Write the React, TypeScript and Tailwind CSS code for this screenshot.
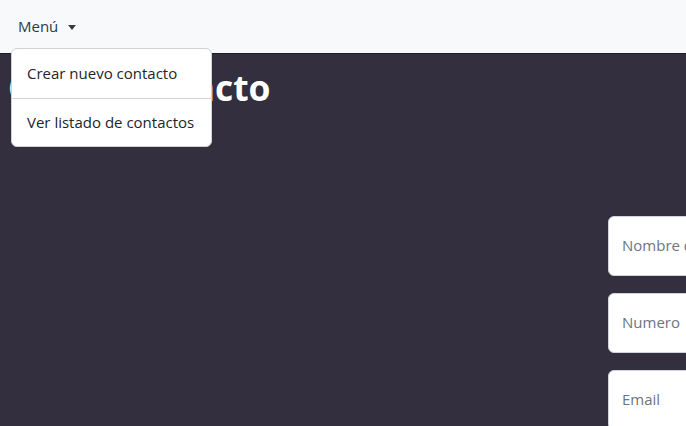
const fields = ["Nombre de contacto", "Numero", "Email"];

export default function App() {
  return (
    <div className="relative h-[426px] w-[686px] overflow-hidden bg-[#342f3e] font-['Open_Sans',sans-serif]">
      {/* Navbar */}
      <nav className="flex h-[54px] items-center border-b border-[#1e1b24] bg-[#f8f9fa] px-[18px]">
        <button className="flex items-center gap-[10px] text-[15px] text-[#2b3a48]">
          Menú
          <span className="mt-[1px] h-0 w-0 border-x-[4.5px] border-t-[5px] border-x-transparent border-t-[#3a3a3a]" />
        </button>
      </nav>

      {/* Dropdown menu */}
      <div className="absolute left-[11px] top-[48px] z-10 w-[201px] rounded-md border border-[#d0d2d5] bg-white">
        <div className="flex h-[49px] items-center px-[15px] text-[15px] text-[#212529]">
          Crear nuevo contacto
        </div>
        <div className="h-px bg-[#d3d5d8]" />
        <div className="flex h-[47px] items-center px-[15px] text-[15px] text-[#212529]">
          Ver listado de contactos
        </div>
      </div>

      {/* Content */}
      <main className="px-2">
        <h1 className="mt-[12px] text-[35.5px] font-bold leading-[1.2] text-white">
          Crear contacto
        </h1>
        <form className="ml-[600px] mt-[107px] flex w-[320px] flex-col gap-[17px]">
          {fields.map((f) => (
            <div
              key={f}
              className="flex h-[60px] items-center rounded-md border border-[#ced4da] bg-white px-[13px] text-[15px] text-[#6c757d]"
            >
              {f}
            </div>
          ))}
        </form>
      </main>
    </div>
  );
}
